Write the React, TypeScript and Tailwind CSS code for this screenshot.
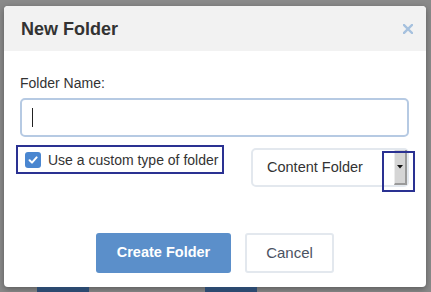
import React from "react";

function CloseIcon() {
  return (
    <svg width="10" height="10" viewBox="0 0 10 10" className="text-[#a6c1de]">
      <path d="M1 1 L9 9 M9 1 L1 9" stroke="currentColor" strokeWidth="2.4" strokeLinecap="square" />
    </svg>
  );
}

function CheckMark() {
  return (
    <svg width="10" height="10" viewBox="0 0 10 10">
      <path d="M1.6 5.2 L4 7.6 L8.6 2.4" stroke="white" strokeWidth="2" fill="none" strokeLinecap="round" strokeLinejoin="round" />
    </svg>
  );
}

export default function App() {
  return (
    <div
      className="w-[431px] h-[292px] overflow-hidden bg-[#8a8a8a] pt-[6px] pl-[4px]"
      style={{ fontFamily: '"Liberation Sans", Arial, sans-serif' }}
    >
      <div className="w-[422px] h-[281px] bg-white rounded-[4px] shadow-[0_2px_6px_rgba(0,0,0,0.35)] flex flex-col overflow-hidden">
        {/* Header */}
        <div className="h-[45px] bg-[#f2f2f2] flex items-center justify-between pl-[17px] pr-[13px] shrink-0">
          <span className="text-[18px] font-bold text-[#333] leading-none pt-[1px]">New Folder</span>
          <CloseIcon />
        </div>

        {/* Body */}
        <div className="flex flex-col px-[16px] pt-[22px]">
          <label className="text-[14px] leading-[20px] text-[#333]">Folder Name:</label>
          <div className="mt-[5px] h-[39px] w-[389px] border-2 border-[#b6cae3] rounded-[5px] flex items-center pl-[10px]">
            <div className="w-[1px] h-[19px] bg-[#222]" />
          </div>

          <div className="flex items-start justify-between mt-[8px] w-[389px]">
            <div className="-ml-[4px] w-[208px] h-[29px] border-2 border-[#2a3192] flex items-center pl-[7px] gap-[7px]">
              <div className="w-[16px] h-[16px] rounded-[3px] bg-[#4a86d0] flex items-center justify-center">
                <CheckMark />
              </div>
              <span className="text-[14px] text-[#333] leading-none">Use a custom type of folder</span>
            </div>

            <div className="relative mt-[3px]">
              <div className="w-[158px] h-[39px] border-2 border-[#e3e8ee] rounded-[5px] flex items-center justify-between pl-[14px] pr-[0px]">
                <span className="text-[14.5px] text-[#333] leading-none">Content Folder</span>
                <div className="w-[13px] h-[35px] bg-[#d5d5d5] border-r-2 border-b-2 border-[#9a9a9a] border-l border-l-[#ececec] flex items-center justify-center">
                  <svg width="6" height="4" viewBox="0 0 6 4">
                    <path d="M0 0 L6 0 L3 3.5 Z" fill="#111" />
                  </svg>
                </div>
              </div>
              <div className="absolute left-[131px] top-[3px] w-[33px] h-[41px] border-2 border-[#2a3192] pointer-events-none" />
            </div>
          </div>

          <div className="flex justify-center gap-[14px] mt-[46px]">
            <button className="w-[135px] h-[40px] bg-[#5b8fca] rounded-[3px] text-white font-bold text-[14.5px]">
              Create Folder
            </button>
            <button className="w-[89px] h-[40px] border-2 border-[#e3e8ee] rounded-[3px] bg-white text-[#4b5262] text-[15px]">
              Cancel
            </button>
          </div>
        </div>
      </div>
      <div className="flex h-[6px]">
        <div className="ml-[33px] w-[52px] h-full bg-[#2c4a70]" />
        <div className="ml-[116px] w-[52px] h-full bg-[#2c4a70]" />
      </div>
    </div>
  );
}
